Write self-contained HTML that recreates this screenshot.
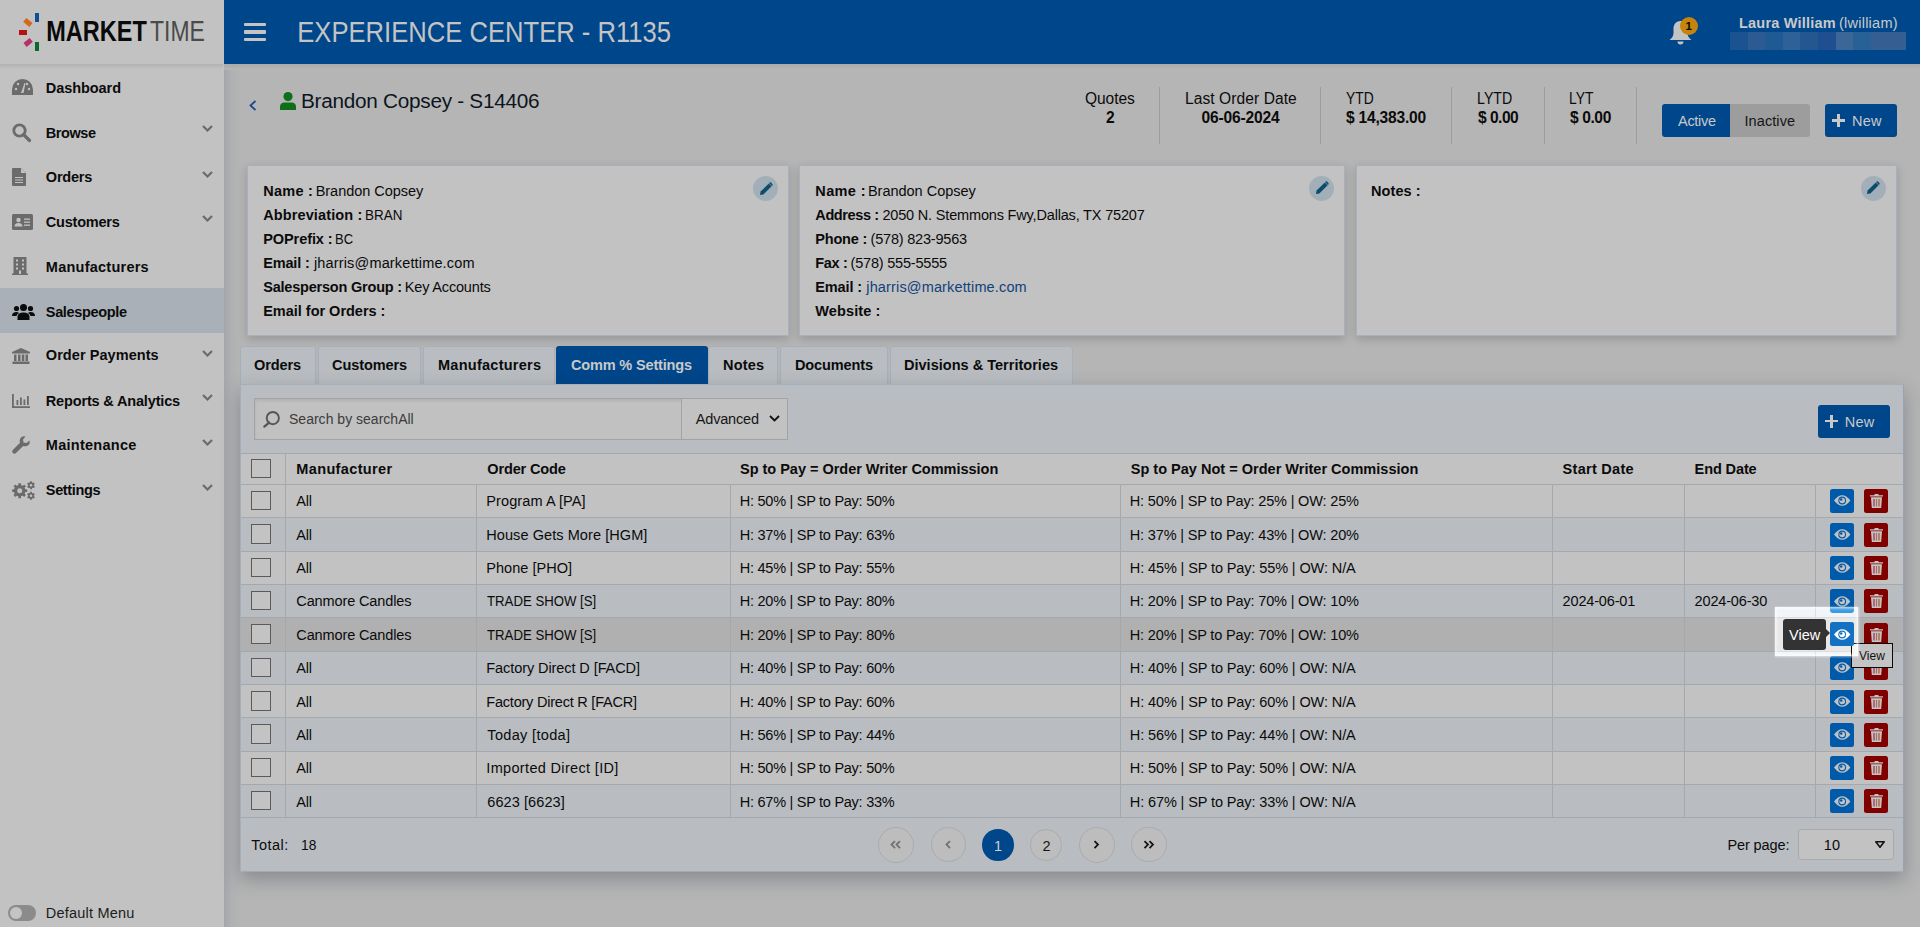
<!DOCTYPE html>
<html><head><meta charset="utf-8">
<style>
*{margin:0;padding:0;box-sizing:border-box}
html,body{width:1920px;height:927px;overflow:hidden}
body{background:#b5b5b5;font-family:"Liberation Sans",sans-serif;position:relative}
.a{position:absolute}
.t{position:absolute;white-space:nowrap;line-height:1;font-family:"Liberation Sans",sans-serif}
svg{position:absolute;overflow:visible}
</style></head><body>
<!-- main content shadow strip near sidebar -->
<div class="a" style="left:224px;top:64px;width:20px;height:863px;background:linear-gradient(90deg,#a5a6aa 0,#b0b1b3 8px,#b5b5b5 18px)"></div>
<!-- header -->
<div class="a" style="left:223px;top:0;width:1697px;height:64px;background:#00468a"></div>
<div class="a" style="left:223px;top:64px;width:1697px;height:6px;background:linear-gradient(#a9a9a9,#b7b7b7)"></div>
<!-- sidebar -->
<div class="a" style="left:0;top:0;width:224px;height:927px;background:#c2c2c2"></div>
<div class="a" style="left:0;top:64px;width:223px;height:5px;background:linear-gradient(#b2b2b2,#c2c2c2)"></div>
<div class="a" style="left:0;top:288px;width:224px;height:45px;background:#a9b0b8"></div>
<!-- logo marks -->
<div class="a" style="left:34.5px;top:13px;width:4.5px;height:8.5px;background:#0e4f96"></div>
<div class="a" style="left:34.5px;top:42px;width:4.5px;height:8.5px;background:#0b6a2a"></div>
<div class="a" style="left:19px;top:30px;width:8px;height:4.5px;background:#b80f14"></div>
<div class="a" style="left:23.5px;top:19.5px;width:8px;height:4.5px;background:#d2691a;transform:rotate(40deg)"></div>
<div class="a" style="left:23.5px;top:39.5px;width:8px;height:4.5px;background:#b8306a;transform:rotate(-40deg)"></div>
<!-- hamburger -->
<div class="a" style="left:244px;top:22.5px;width:22px;height:3.5px;background:#c4c4c4;border-radius:1px"></div>
<div class="a" style="left:244px;top:30px;width:22px;height:3.5px;background:#c4c4c4;border-radius:1px"></div>
<div class="a" style="left:244px;top:37.5px;width:22px;height:3.5px;background:#c4c4c4;border-radius:1px"></div>
<!-- bell -->
<svg style="left:1669px;top:20px" width="23" height="25" viewBox="0 0 23 25"><path d="M11.5 1 C6.5 1 4.5 5 4.5 9 L4.5 13 C4.5 16 3 18 0.5 20 L22.5 20 C20 18 18.5 16 18.5 13 L18.5 9 C18.5 5 16.5 1 11.5 1Z M8.5 21.5 A3 3 0 0 0 14.5 21.5Z" fill="#c4c4c4"/></svg>
<div class="a" style="left:1680px;top:17px;width:18px;height:18px;border-radius:50%;background:#c5840c"></div>
<!-- pixelated -->
<div class="a" style="left:1730px;top:32px;width:176px;height:18px;display:flex">
<div style="flex:1;background:#1b5390"></div><div style="flex:1;background:#2b5b92"></div><div style="flex:1;background:#1f5a95"></div><div style="flex:1;background:#2d6197"></div><div style="flex:1;background:#24568f"></div><div style="flex:1;background:#1f4f91"></div><div style="flex:1;background:#3b6798"></div><div style="flex:1;background:#286195"></div><div style="flex:1;background:#355f93"></div><div style="flex:1;background:#355f93"></div>
</div>
<!-- sidebar icons -->
<svg style="left:11.6px;top:79px" width="21" height="16" viewBox="0 0 21 16"><path d="M10.5 0 A10.5 10.5 0 0 0 0 10.5 L0 16 L21 16 L21 10.5 A10.5 10.5 0 0 0 10.5 0Z" fill="#6b6b6b"/><circle cx="4" cy="10" r="1.2" fill="#c2c2c2"/><circle cx="17" cy="10" r="1.2" fill="#c2c2c2"/><circle cx="6" cy="5" r="1.2" fill="#c2c2c2"/><circle cx="15" cy="5" r="1.2" fill="#c2c2c2"/><path d="M9 14 L12.5 4 L13.5 4.3 L11.5 14Z" fill="#c2c2c2"/></svg>
<svg style="left:11.6px;top:123px" width="19" height="19" viewBox="0 0 19 19"><circle cx="7.5" cy="7.5" r="5.7" fill="none" stroke="#6b6b6b" stroke-width="2.8"/><path d="M11.5 11.5 L17.5 17.5" stroke="#6b6b6b" stroke-width="3.2" stroke-linecap="round"/></svg>
<svg style="left:11.6px;top:168px" width="14" height="18" viewBox="0 0 14 18"><path d="M0 1 Q0 0 1 0 L9 0 L14 5 L14 17 Q14 18 13 18 L1 18 Q0 18 0 17Z" fill="#6b6b6b"/><path d="M9 0 L9 5 L14 5Z" fill="#c2c2c2"/><rect x="3" y="9" width="8" height="1" fill="#c2c2c2"/><rect x="3" y="11.5" width="8" height="1" fill="#c2c2c2"/><rect x="3" y="14" width="8" height="1" fill="#c2c2c2"/></svg>
<svg style="left:11.6px;top:214px" width="21" height="16" viewBox="0 0 21 16"><rect x="0" y="0" width="21" height="16" rx="1.5" fill="#6b6b6b"/><circle cx="6.5" cy="6" r="2.2" fill="#c2c2c2"/><path d="M2.5 12.5 Q2.5 9 6.5 9 Q10.5 9 10.5 12.5Z" fill="#c2c2c2"/><rect x="12" y="4.5" width="6" height="1.3" fill="#c2c2c2"/><rect x="12" y="7.5" width="6" height="1.3" fill="#c2c2c2"/><rect x="12" y="10.5" width="6" height="1.3" fill="#c2c2c2"/></svg>
<svg style="left:12px;top:257px" width="16" height="18" viewBox="0 0 16 18"><rect x="1.5" y="0" width="13" height="18" fill="#6b6b6b"/><rect x="0" y="16.5" width="16" height="1.5" fill="#6b6b6b"/><g fill="#c2c2c2"><rect x="4" y="2.5" width="2" height="2"/><rect x="10" y="2.5" width="2" height="2"/><rect x="4" y="6.5" width="2" height="2"/><rect x="10" y="6.5" width="2" height="2"/><rect x="4" y="10.5" width="2" height="2"/><rect x="10" y="10.5" width="2" height="2"/><rect x="7" y="13.5" width="2" height="3.5"/></g></svg>
<svg style="left:12px;top:303.5px" width="23" height="16" viewBox="0 0 23 16"><circle cx="11.5" cy="3.5" r="3.5" fill="#0b0b0b"/><circle cx="4.5" cy="4.5" r="2.6" fill="#0b0b0b"/><circle cx="18.5" cy="4.5" r="2.6" fill="#0b0b0b"/><path d="M5.5 16 L5.5 13 Q5.5 8.5 11.5 8.5 Q17.5 8.5 17.5 13 L17.5 16Z" fill="#0b0b0b"/><path d="M0 12 Q0 8 4.5 8 Q6 8 7 9 Q4.5 10.5 4.5 12Z" fill="#0b0b0b"/><path d="M23 12 Q23 8 18.5 8 Q17 8 16 9 Q18.5 10.5 18.5 12Z" fill="#0b0b0b"/></svg>
<svg style="left:12px;top:348px" width="18" height="16" viewBox="0 0 18 16"><path d="M9 0 L18 4 L18 5.5 L0 5.5 L0 4Z" fill="#6b6b6b"/><rect x="2" y="6.5" width="2.5" height="6.5" fill="#6b6b6b"/><rect x="6" y="6.5" width="2.5" height="6.5" fill="#6b6b6b"/><rect x="9.8" y="6.5" width="2.5" height="6.5" fill="#6b6b6b"/><rect x="13.5" y="6.5" width="2.5" height="6.5" fill="#6b6b6b"/><rect x="0.5" y="13.5" width="17" height="2.5" fill="#6b6b6b"/></svg>
<svg style="left:12px;top:394px" width="18" height="14" viewBox="0 0 18 14"><path d="M0 0 L1.8 0 L1.8 12.2 L18 12.2 L18 14 L0 14Z" fill="#6b6b6b"/><rect x="4.5" y="6" width="1.8" height="5" fill="#6b6b6b"/><rect x="8" y="3.5" width="1.8" height="7.5" fill="#6b6b6b"/><rect x="11.5" y="5.5" width="1.8" height="5.5" fill="#6b6b6b"/><rect x="15" y="2" width="1.8" height="9" fill="#6b6b6b"/></svg>
<svg style="left:12px;top:436px" width="18" height="18" viewBox="0 0 18 18"><path d="M17.5 4.5 L14.5 7 L11.5 6.5 L11 3.5 L13.5 0.5 Q9.5 -0.5 8 3 Q7.3 5 8 6.8 L0.8 14 Q-0.5 15.5 0.8 17 Q2.5 18.5 4 17 L11.2 10 Q13 10.7 15 10 Q18.5 8.5 17.5 4.5Z" fill="#6b6b6b"/></svg>
<svg style="left:12px;top:480.5px" width="23" height="19" viewBox="0 0 23 19"><path d="M6.35 4.27 L6.45 2.20 L8.95 2.20 L9.05 4.27 L10.59 4.90 L12.12 3.52 L13.88 5.28 L12.50 6.81 L13.13 8.35 L15.20 8.45 L15.20 10.95 L13.13 11.05 L12.50 12.59 L13.88 14.12 L12.12 15.88 L10.59 14.50 L9.05 15.13 L8.95 17.20 L6.45 17.20 L6.35 15.13 L4.81 14.50 L3.28 15.88 L1.52 14.12 L2.90 12.59 L2.27 11.05 L0.20 10.95 L0.20 8.45 L2.27 8.35 L2.90 6.81 L1.52 5.28 L3.28 3.52 L4.81 4.90Z" fill="#6b6b6b"/><circle cx="7.7" cy="9.7" r="5.6" fill="#6b6b6b"/><circle cx="7.7" cy="9.7" r="2.5" fill="#c2c2c2"/><path d="M18.08 1.45 L18.11 0.20 L19.89 0.20 L19.92 1.45 L20.92 2.02 L22.02 1.42 L22.91 2.97 L21.84 3.63 L21.84 4.77 L22.91 5.43 L22.02 6.98 L20.92 6.38 L19.92 6.95 L19.89 8.20 L18.11 8.20 L18.08 6.95 L17.08 6.38 L15.98 6.98 L15.09 5.43 L16.16 4.77 L16.16 3.63 L15.09 2.97 L15.98 1.42 L17.08 2.02Z" fill="#6b6b6b"/><circle cx="19" cy="4.2" r="2.9" fill="#6b6b6b"/><circle cx="19" cy="4.2" r="1.2" fill="#c2c2c2"/><path d="M18.08 12.05 L18.11 10.80 L19.89 10.80 L19.92 12.05 L20.92 12.62 L22.02 12.02 L22.91 13.57 L21.84 14.23 L21.84 15.37 L22.91 16.03 L22.02 17.58 L20.92 16.98 L19.92 17.55 L19.89 18.80 L18.11 18.80 L18.08 17.55 L17.08 16.98 L15.98 17.58 L15.09 16.03 L16.16 15.37 L16.16 14.23 L15.09 13.57 L15.98 12.02 L17.08 12.62Z" fill="#6b6b6b"/><circle cx="19" cy="14.8" r="2.9" fill="#6b6b6b"/><circle cx="19" cy="14.8" r="1.2" fill="#c2c2c2"/></svg>
<!-- sidebar chevrons -->
<svg style="left:202px;top:125px" width="11" height="7" viewBox="0 0 11 7"><path d="M1 1 L5.5 5.5 L10 1" fill="none" stroke="#6b6b6b" stroke-width="2.2"/></svg>
<svg style="left:202px;top:170.5px" width="11" height="7" viewBox="0 0 11 7"><path d="M1 1 L5.5 5.5 L10 1" fill="none" stroke="#6b6b6b" stroke-width="2.2"/></svg>
<svg style="left:202px;top:214.5px" width="11" height="7" viewBox="0 0 11 7"><path d="M1 1 L5.5 5.5 L10 1" fill="none" stroke="#6b6b6b" stroke-width="2.2"/></svg>
<svg style="left:202px;top:349.5px" width="11" height="7" viewBox="0 0 11 7"><path d="M1 1 L5.5 5.5 L10 1" fill="none" stroke="#6b6b6b" stroke-width="2.2"/></svg>
<svg style="left:202px;top:394px" width="11" height="7" viewBox="0 0 11 7"><path d="M1 1 L5.5 5.5 L10 1" fill="none" stroke="#6b6b6b" stroke-width="2.2"/></svg>
<svg style="left:202px;top:438.5px" width="11" height="7" viewBox="0 0 11 7"><path d="M1 1 L5.5 5.5 L10 1" fill="none" stroke="#6b6b6b" stroke-width="2.2"/></svg>
<svg style="left:202px;top:483.5px" width="11" height="7" viewBox="0 0 11 7"><path d="M1 1 L5.5 5.5 L10 1" fill="none" stroke="#6b6b6b" stroke-width="2.2"/></svg>
<!-- default menu toggle -->
<div class="a" style="left:8px;top:905px;width:28px;height:16px;border-radius:8px;background:#8b8b8b"></div>
<div class="a" style="left:10px;top:907px;width:12px;height:12px;border-radius:50%;background:#c4c4c4"></div>
<!-- title icons -->
<svg style="left:249px;top:99.5px" width="8" height="11" viewBox="0 0 8 11"><path d="M6.5 1 L1.5 5.5 L6.5 10" fill="none" stroke="#1a4c8c" stroke-width="1.8"/></svg>
<svg style="left:280px;top:92px" width="16" height="18" viewBox="0 0 16 18"><circle cx="8" cy="4.6" r="4.6" fill="#0e6e1a"/><path d="M0 18 L0 15 Q0 10.5 4.5 10.5 L11.5 10.5 Q16 10.5 16 15 L16 18Z" fill="#0e6e1a"/></svg>
<!-- stats separators -->
<div class="a" style="left:1159px;top:87px;width:1px;height:57px;background:#9c9c9c"></div>
<div class="a" style="left:1320px;top:87px;width:1px;height:57px;background:#9c9c9c"></div>
<div class="a" style="left:1451px;top:87px;width:1px;height:57px;background:#9c9c9c"></div>
<div class="a" style="left:1544px;top:87px;width:1px;height:57px;background:#9c9c9c"></div>
<div class="a" style="left:1636px;top:87px;width:1px;height:57px;background:#9c9c9c"></div>
<!-- active/inactive/new -->
<div class="a" style="left:1662px;top:104px;width:68px;height:33px;background:#00468a;border-radius:3px 0 0 3px"></div>
<div class="a" style="left:1730px;top:104px;width:80px;height:33px;background:#9d9d9d;border-radius:0 3px 3px 0"></div>
<div class="a" style="left:1825px;top:104px;width:72px;height:33px;background:#00468a;border-radius:3px"></div>
<div class="a" style="left:1832px;top:119px;width:13px;height:2.6px;background:#c9c9c9"></div>
<div class="a" style="left:1837.2px;top:113.8px;width:2.6px;height:13px;background:#c9c9c9"></div>
<!-- cards -->
<div class="a" style="left:247px;top:165px;width:541.5px;height:170.5px;background:#c2c2c2;border:1px solid #a8b1bb;box-shadow:0 3px 9px rgba(20,25,40,0.2)"></div>
<div class="a" style="left:799px;top:165px;width:545.5px;height:170.5px;background:#c2c2c2;border:1px solid #a8b1bb;box-shadow:0 3px 9px rgba(20,25,40,0.2)"></div>
<div class="a" style="left:1356px;top:165px;width:541px;height:170.5px;background:#c2c2c2;border:1px solid #a8b1bb;box-shadow:0 3px 9px rgba(20,25,40,0.2)"></div>
<div class="a" style="left:753.1px;top:176.0px;width:25px;height:25px;border-radius:50%;background:#a3afb8"></div><svg style="left:758.6px;top:181.5px" width="14" height="14" viewBox="0 0 14 14"><path d="M1 13 L1.6 9.6 L9.8 1.4 L12.6 4.2 L4.4 12.4Z" fill="#0c4d6c"/><path d="M10.6 0.6 Q11.3 -0.1 12 0.6 L13.4 2 Q14.1 2.7 13.4 3.4 L12.9 3.9 L10.1 1.1Z" fill="#0c4d6c"/></svg><div class="a" style="left:1309.0px;top:175.8px;width:25px;height:25px;border-radius:50%;background:#a3afb8"></div><svg style="left:1314.5px;top:181.3px" width="14" height="14" viewBox="0 0 14 14"><path d="M1 13 L1.6 9.6 L9.8 1.4 L12.6 4.2 L4.4 12.4Z" fill="#0c4d6c"/><path d="M10.6 0.6 Q11.3 -0.1 12 0.6 L13.4 2 Q14.1 2.7 13.4 3.4 L12.9 3.9 L10.1 1.1Z" fill="#0c4d6c"/></svg><div class="a" style="left:1860.5px;top:175.8px;width:25px;height:25px;border-radius:50%;background:#a3afb8"></div><svg style="left:1866px;top:181.3px" width="14" height="14" viewBox="0 0 14 14"><path d="M1 13 L1.6 9.6 L9.8 1.4 L12.6 4.2 L4.4 12.4Z" fill="#0c4d6c"/><path d="M10.6 0.6 Q11.3 -0.1 12 0.6 L13.4 2 Q14.1 2.7 13.4 3.4 L12.9 3.9 L10.1 1.1Z" fill="#0c4d6c"/></svg>
<!-- tabs -->
<div class="a" style="left:239.7px;top:345.7px;width:76.30000000000001px;height:38.8px;background:#b9bdc1;border:1px solid #a7b0ba;border-bottom:none;border-radius:3px 3px 0 0"></div><div class="a" style="left:317.8px;top:345.7px;width:103.5px;height:38.8px;background:#b9bdc1;border:1px solid #a7b0ba;border-bottom:none;border-radius:3px 3px 0 0"></div><div class="a" style="left:422.5px;top:345.7px;width:132.5px;height:38.8px;background:#b9bdc1;border:1px solid #a7b0ba;border-bottom:none;border-radius:3px 3px 0 0"></div><div class="a" style="left:555.8px;top:345.7px;width:151.80000000000007px;height:38.3px;background:#00468a;border-radius:3px 3px 0 0"></div><div class="a" style="left:708.4px;top:345.7px;width:69.89999999999998px;height:38.8px;background:#b9bdc1;border:1px solid #a7b0ba;border-bottom:none;border-radius:3px 3px 0 0"></div><div class="a" style="left:780px;top:345.7px;width:108px;height:38.8px;background:#b9bdc1;border:1px solid #a7b0ba;border-bottom:none;border-radius:3px 3px 0 0"></div><div class="a" style="left:889.5px;top:345.7px;width:183.9000000000001px;height:38.8px;background:#b9bdc1;border:1px solid #a7b0ba;border-bottom:none;border-radius:3px 3px 0 0"></div><div class="a" style="left:1073px;top:383.5px;width:830.5px;height:1px;background:#9fa9b4"></div>
<!-- panel -->
<div class="a" style="left:240px;top:384px;width:1663.5px;height:488px;background:#b9bdc1;border:1px solid #a5afba;border-right:1.5px solid #98a3b1;border-bottom:1.5px solid #a0abb8;box-shadow:0 7px 18px rgba(25,35,55,0.3)"></div>
<!-- search -->
<div class="a" style="left:254.3px;top:398.3px;width:534px;height:41.5px;background:#c1c1c1;border:1px solid #a3a3a3;box-shadow:inset 0 2px 3px rgba(0,0,0,0.08)"></div>
<div class="a" style="left:681.3px;top:398.3px;width:107px;height:41.5px;background:#c2c2c2;border:1px solid #a3a3a3"></div>
<svg style="left:262.5px;top:410.5px" width="17" height="17" viewBox="0 0 17 17"><circle cx="9.8" cy="7.1" r="6.1" fill="none" stroke="#555" stroke-width="1.9"/><path d="M6.2 11.6 L1.3 15.6" stroke="#555" stroke-width="2.3" stroke-linecap="round"/></svg>
<svg style="left:769px;top:414.5px" width="11" height="7" viewBox="0 0 11 7"><path d="M1 1 L5.5 5.5 L10 1" fill="none" stroke="#111" stroke-width="1.8"/></svg>
<div class="a" style="left:1818px;top:404.8px;width:72px;height:33px;background:#00468a;border-radius:3px"></div>
<div class="a" style="left:1825px;top:419.8px;width:13px;height:2.6px;background:#c9c9c9"></div>
<div class="a" style="left:1830.2px;top:414.6px;width:2.6px;height:13px;background:#c9c9c9"></div>
<!-- table -->
<div class="a" style="left:240.5px;top:453.5px;width:1662.5px;height:30.5px;background:#c2c2c2"></div><div class="a" style="left:240.5px;top:484px;width:1662.5px;height:33.5px;background:#c2c2c2"></div><div class="a" style="left:240.5px;top:517.5px;width:1662.5px;height:33.5px;background:#b9bdc1"></div><div class="a" style="left:240.5px;top:551px;width:1662.5px;height:33.299999999999955px;background:#c2c2c2"></div><div class="a" style="left:240.5px;top:584.3px;width:1662.5px;height:33.200000000000045px;background:#b9bdc1"></div><div class="a" style="left:240.5px;top:617.5px;width:1662.5px;height:33.5px;background:#b0b0b0"></div><div class="a" style="left:240.5px;top:651px;width:1662.5px;height:33.5px;background:#b9bdc1"></div><div class="a" style="left:240.5px;top:684.5px;width:1662.5px;height:33.200000000000045px;background:#c2c2c2"></div><div class="a" style="left:240.5px;top:717.7px;width:1662.5px;height:33.299999999999955px;background:#b9bdc1"></div><div class="a" style="left:240.5px;top:751px;width:1662.5px;height:33.39999999999998px;background:#c2c2c2"></div><div class="a" style="left:240.5px;top:784.4px;width:1662.5px;height:33.0px;background:#b9bdc1"></div><div class="a" style="left:240.5px;top:453.0px;width:1662.5px;height:1px;background:#a4a9ae"></div><div class="a" style="left:240.5px;top:483.5px;width:1662.5px;height:1px;background:#a4a9ae"></div><div class="a" style="left:240.5px;top:517.0px;width:1662.5px;height:1px;background:#a4a9ae"></div><div class="a" style="left:240.5px;top:550.5px;width:1662.5px;height:1px;background:#a4a9ae"></div><div class="a" style="left:240.5px;top:583.8px;width:1662.5px;height:1px;background:#a4a9ae"></div><div class="a" style="left:240.5px;top:617.0px;width:1662.5px;height:1px;background:#a4a9ae"></div><div class="a" style="left:240.5px;top:650.5px;width:1662.5px;height:1px;background:#a4a9ae"></div><div class="a" style="left:240.5px;top:684.0px;width:1662.5px;height:1px;background:#a4a9ae"></div><div class="a" style="left:240.5px;top:717.2px;width:1662.5px;height:1px;background:#a4a9ae"></div><div class="a" style="left:240.5px;top:750.5px;width:1662.5px;height:1px;background:#a4a9ae"></div><div class="a" style="left:240.5px;top:783.9px;width:1662.5px;height:1px;background:#a4a9ae"></div><div class="a" style="left:240.5px;top:816.9px;width:1662.5px;height:1px;background:#a4a9ae"></div><div class="a" style="left:285px;top:453.5px;width:1px;height:363.9px;background:#a4a9ae"></div><div class="a" style="left:476.0px;top:484px;width:1px;height:333.4px;background:#a4a9ae"></div><div class="a" style="left:730.0px;top:484px;width:1px;height:333.4px;background:#a4a9ae"></div><div class="a" style="left:1120.0px;top:484px;width:1px;height:333.4px;background:#a4a9ae"></div><div class="a" style="left:1552.3px;top:484px;width:1px;height:333.4px;background:#a4a9ae"></div><div class="a" style="left:1683.9px;top:484px;width:1px;height:333.4px;background:#a4a9ae"></div><div class="a" style="left:1814.8px;top:484px;width:1px;height:333.4px;background:#a4a9ae"></div><div class="a" style="left:251px;top:458.7px;width:19.5px;height:19.5px;background:#c3c3c3;border:1px solid #5a5a5a;border-radius:0"></div><div class="a" style="left:251px;top:490.75px;width:19.5px;height:19.5px;background:#c3c3c3;border:1px solid #5a5a5a;border-radius:0"></div><div class="a" style="left:1830px;top:489px;width:24px;height:24px;background:#005aaa;border-radius:2.5px"></div><svg style="left:1833.8px;top:495.2px" width="16.4" height="11" viewBox="0 0 16.4 11"><path d="M0 5.5 Q8.2 -5 16.4 5.5 Q8.2 16 0 5.5Z" fill="#c3c3c3"/><circle cx="8.2" cy="5.5" r="3.9" fill="#005aaa"/><circle cx="8.2" cy="5.5" r="2.8" fill="#c3c3c3"/><circle cx="7.2" cy="4.5" r="1.3" fill="#005aaa"/></svg><div class="a" style="left:1864px;top:489px;width:24px;height:24px;background:#800000;border-radius:2.5px"></div><svg style="left:1869.5px;top:494px" width="13" height="14" viewBox="0 0 13 14"><path d="M0 1.2 L4.2 1.2 L4.8 0 L8.2 0 L8.8 1.2 L13 1.2 L13 2.6 L0 2.6Z" fill="#c3c3c3"/><path d="M1 3.3 L12 3.3 L11.2 14 L1.8 14Z" fill="#c3c3c3"/><rect x="3.4" y="5" width="1.2" height="7.5" fill="#a02a60"/><rect x="5.9" y="5" width="1.2" height="7.5" fill="#b0703a"/><rect x="8.4" y="5" width="1.2" height="7.5" fill="#a8583a"/></svg><div class="a" style="left:251px;top:524.25px;width:19.5px;height:19.5px;background:#c3c3c3;border:1px solid #5a5a5a;border-radius:0"></div><div class="a" style="left:1830px;top:522.5px;width:24px;height:24px;background:#005aaa;border-radius:2.5px"></div><svg style="left:1833.8px;top:528.7px" width="16.4" height="11" viewBox="0 0 16.4 11"><path d="M0 5.5 Q8.2 -5 16.4 5.5 Q8.2 16 0 5.5Z" fill="#c3c3c3"/><circle cx="8.2" cy="5.5" r="3.9" fill="#005aaa"/><circle cx="8.2" cy="5.5" r="2.8" fill="#c3c3c3"/><circle cx="7.2" cy="4.5" r="1.3" fill="#005aaa"/></svg><div class="a" style="left:1864px;top:522.5px;width:24px;height:24px;background:#800000;border-radius:2.5px"></div><svg style="left:1869.5px;top:527.5px" width="13" height="14" viewBox="0 0 13 14"><path d="M0 1.2 L4.2 1.2 L4.8 0 L8.2 0 L8.8 1.2 L13 1.2 L13 2.6 L0 2.6Z" fill="#c3c3c3"/><path d="M1 3.3 L12 3.3 L11.2 14 L1.8 14Z" fill="#c3c3c3"/><rect x="3.4" y="5" width="1.2" height="7.5" fill="#a02a60"/><rect x="5.9" y="5" width="1.2" height="7.5" fill="#b0703a"/><rect x="8.4" y="5" width="1.2" height="7.5" fill="#a8583a"/></svg><div class="a" style="left:251px;top:557.65px;width:19.5px;height:19.5px;background:#c3c3c3;border:1px solid #5a5a5a;border-radius:0"></div><div class="a" style="left:1830px;top:556px;width:24px;height:24px;background:#005aaa;border-radius:2.5px"></div><svg style="left:1833.8px;top:562.2px" width="16.4" height="11" viewBox="0 0 16.4 11"><path d="M0 5.5 Q8.2 -5 16.4 5.5 Q8.2 16 0 5.5Z" fill="#c3c3c3"/><circle cx="8.2" cy="5.5" r="3.9" fill="#005aaa"/><circle cx="8.2" cy="5.5" r="2.8" fill="#c3c3c3"/><circle cx="7.2" cy="4.5" r="1.3" fill="#005aaa"/></svg><div class="a" style="left:1864px;top:556px;width:24px;height:24px;background:#800000;border-radius:2.5px"></div><svg style="left:1869.5px;top:561px" width="13" height="14" viewBox="0 0 13 14"><path d="M0 1.2 L4.2 1.2 L4.8 0 L8.2 0 L8.8 1.2 L13 1.2 L13 2.6 L0 2.6Z" fill="#c3c3c3"/><path d="M1 3.3 L12 3.3 L11.2 14 L1.8 14Z" fill="#c3c3c3"/><rect x="3.4" y="5" width="1.2" height="7.5" fill="#a02a60"/><rect x="5.9" y="5" width="1.2" height="7.5" fill="#b0703a"/><rect x="8.4" y="5" width="1.2" height="7.5" fill="#a8583a"/></svg><div class="a" style="left:251px;top:590.9px;width:19.5px;height:19.5px;background:#c3c3c3;border:1px solid #5a5a5a;border-radius:0"></div><div class="a" style="left:1830px;top:589.3px;width:24px;height:24px;background:#005aaa;border-radius:2.5px"></div><svg style="left:1833.8px;top:595.5px" width="16.4" height="11" viewBox="0 0 16.4 11"><path d="M0 5.5 Q8.2 -5 16.4 5.5 Q8.2 16 0 5.5Z" fill="#c3c3c3"/><circle cx="8.2" cy="5.5" r="3.9" fill="#005aaa"/><circle cx="8.2" cy="5.5" r="2.8" fill="#c3c3c3"/><circle cx="7.2" cy="4.5" r="1.3" fill="#005aaa"/></svg><div class="a" style="left:1864px;top:589.3px;width:24px;height:24px;background:#800000;border-radius:2.5px"></div><svg style="left:1869.5px;top:594.3px" width="13" height="14" viewBox="0 0 13 14"><path d="M0 1.2 L4.2 1.2 L4.8 0 L8.2 0 L8.8 1.2 L13 1.2 L13 2.6 L0 2.6Z" fill="#c3c3c3"/><path d="M1 3.3 L12 3.3 L11.2 14 L1.8 14Z" fill="#c3c3c3"/><rect x="3.4" y="5" width="1.2" height="7.5" fill="#a02a60"/><rect x="5.9" y="5" width="1.2" height="7.5" fill="#b0703a"/><rect x="8.4" y="5" width="1.2" height="7.5" fill="#a8583a"/></svg><div class="a" style="left:251px;top:624.25px;width:19.5px;height:19.5px;background:#c3c3c3;border:1px solid #5a5a5a;border-radius:0"></div><div class="a" style="left:1830px;top:622.5px;width:24px;height:24px;background:#005aaa;border-radius:2.5px"></div><svg style="left:1833.8px;top:628.7px" width="16.4" height="11" viewBox="0 0 16.4 11"><path d="M0 5.5 Q8.2 -5 16.4 5.5 Q8.2 16 0 5.5Z" fill="#c3c3c3"/><circle cx="8.2" cy="5.5" r="3.9" fill="#005aaa"/><circle cx="8.2" cy="5.5" r="2.8" fill="#c3c3c3"/><circle cx="7.2" cy="4.5" r="1.3" fill="#005aaa"/></svg><div class="a" style="left:1864px;top:622.5px;width:24px;height:24px;background:#800000;border-radius:2.5px"></div><svg style="left:1869.5px;top:627.5px" width="13" height="14" viewBox="0 0 13 14"><path d="M0 1.2 L4.2 1.2 L4.8 0 L8.2 0 L8.8 1.2 L13 1.2 L13 2.6 L0 2.6Z" fill="#c3c3c3"/><path d="M1 3.3 L12 3.3 L11.2 14 L1.8 14Z" fill="#c3c3c3"/><rect x="3.4" y="5" width="1.2" height="7.5" fill="#a02a60"/><rect x="5.9" y="5" width="1.2" height="7.5" fill="#b0703a"/><rect x="8.4" y="5" width="1.2" height="7.5" fill="#a8583a"/></svg><div class="a" style="left:251px;top:657.75px;width:19.5px;height:19.5px;background:#c3c3c3;border:1px solid #5a5a5a;border-radius:0"></div><div class="a" style="left:1830px;top:656px;width:24px;height:24px;background:#005aaa;border-radius:2.5px"></div><svg style="left:1833.8px;top:662.2px" width="16.4" height="11" viewBox="0 0 16.4 11"><path d="M0 5.5 Q8.2 -5 16.4 5.5 Q8.2 16 0 5.5Z" fill="#c3c3c3"/><circle cx="8.2" cy="5.5" r="3.9" fill="#005aaa"/><circle cx="8.2" cy="5.5" r="2.8" fill="#c3c3c3"/><circle cx="7.2" cy="4.5" r="1.3" fill="#005aaa"/></svg><div class="a" style="left:1864px;top:656px;width:24px;height:24px;background:#800000;border-radius:2.5px"></div><svg style="left:1869.5px;top:661px" width="13" height="14" viewBox="0 0 13 14"><path d="M0 1.2 L4.2 1.2 L4.8 0 L8.2 0 L8.8 1.2 L13 1.2 L13 2.6 L0 2.6Z" fill="#c3c3c3"/><path d="M1 3.3 L12 3.3 L11.2 14 L1.8 14Z" fill="#c3c3c3"/><rect x="3.4" y="5" width="1.2" height="7.5" fill="#a02a60"/><rect x="5.9" y="5" width="1.2" height="7.5" fill="#b0703a"/><rect x="8.4" y="5" width="1.2" height="7.5" fill="#a8583a"/></svg><div class="a" style="left:251px;top:691.1px;width:19.5px;height:19.5px;background:#c3c3c3;border:1px solid #5a5a5a;border-radius:0"></div><div class="a" style="left:1830px;top:689.5px;width:24px;height:24px;background:#005aaa;border-radius:2.5px"></div><svg style="left:1833.8px;top:695.7px" width="16.4" height="11" viewBox="0 0 16.4 11"><path d="M0 5.5 Q8.2 -5 16.4 5.5 Q8.2 16 0 5.5Z" fill="#c3c3c3"/><circle cx="8.2" cy="5.5" r="3.9" fill="#005aaa"/><circle cx="8.2" cy="5.5" r="2.8" fill="#c3c3c3"/><circle cx="7.2" cy="4.5" r="1.3" fill="#005aaa"/></svg><div class="a" style="left:1864px;top:689.5px;width:24px;height:24px;background:#800000;border-radius:2.5px"></div><svg style="left:1869.5px;top:694.5px" width="13" height="14" viewBox="0 0 13 14"><path d="M0 1.2 L4.2 1.2 L4.8 0 L8.2 0 L8.8 1.2 L13 1.2 L13 2.6 L0 2.6Z" fill="#c3c3c3"/><path d="M1 3.3 L12 3.3 L11.2 14 L1.8 14Z" fill="#c3c3c3"/><rect x="3.4" y="5" width="1.2" height="7.5" fill="#a02a60"/><rect x="5.9" y="5" width="1.2" height="7.5" fill="#b0703a"/><rect x="8.4" y="5" width="1.2" height="7.5" fill="#a8583a"/></svg><div class="a" style="left:251px;top:724.35px;width:19.5px;height:19.5px;background:#c3c3c3;border:1px solid #5a5a5a;border-radius:0"></div><div class="a" style="left:1830px;top:722.7px;width:24px;height:24px;background:#005aaa;border-radius:2.5px"></div><svg style="left:1833.8px;top:728.9000000000001px" width="16.4" height="11" viewBox="0 0 16.4 11"><path d="M0 5.5 Q8.2 -5 16.4 5.5 Q8.2 16 0 5.5Z" fill="#c3c3c3"/><circle cx="8.2" cy="5.5" r="3.9" fill="#005aaa"/><circle cx="8.2" cy="5.5" r="2.8" fill="#c3c3c3"/><circle cx="7.2" cy="4.5" r="1.3" fill="#005aaa"/></svg><div class="a" style="left:1864px;top:722.7px;width:24px;height:24px;background:#800000;border-radius:2.5px"></div><svg style="left:1869.5px;top:727.7px" width="13" height="14" viewBox="0 0 13 14"><path d="M0 1.2 L4.2 1.2 L4.8 0 L8.2 0 L8.8 1.2 L13 1.2 L13 2.6 L0 2.6Z" fill="#c3c3c3"/><path d="M1 3.3 L12 3.3 L11.2 14 L1.8 14Z" fill="#c3c3c3"/><rect x="3.4" y="5" width="1.2" height="7.5" fill="#a02a60"/><rect x="5.9" y="5" width="1.2" height="7.5" fill="#b0703a"/><rect x="8.4" y="5" width="1.2" height="7.5" fill="#a8583a"/></svg><div class="a" style="left:251px;top:757.7px;width:19.5px;height:19.5px;background:#c3c3c3;border:1px solid #5a5a5a;border-radius:0"></div><div class="a" style="left:1830px;top:756px;width:24px;height:24px;background:#005aaa;border-radius:2.5px"></div><svg style="left:1833.8px;top:762.2px" width="16.4" height="11" viewBox="0 0 16.4 11"><path d="M0 5.5 Q8.2 -5 16.4 5.5 Q8.2 16 0 5.5Z" fill="#c3c3c3"/><circle cx="8.2" cy="5.5" r="3.9" fill="#005aaa"/><circle cx="8.2" cy="5.5" r="2.8" fill="#c3c3c3"/><circle cx="7.2" cy="4.5" r="1.3" fill="#005aaa"/></svg><div class="a" style="left:1864px;top:756px;width:24px;height:24px;background:#800000;border-radius:2.5px"></div><svg style="left:1869.5px;top:761px" width="13" height="14" viewBox="0 0 13 14"><path d="M0 1.2 L4.2 1.2 L4.8 0 L8.2 0 L8.8 1.2 L13 1.2 L13 2.6 L0 2.6Z" fill="#c3c3c3"/><path d="M1 3.3 L12 3.3 L11.2 14 L1.8 14Z" fill="#c3c3c3"/><rect x="3.4" y="5" width="1.2" height="7.5" fill="#a02a60"/><rect x="5.9" y="5" width="1.2" height="7.5" fill="#b0703a"/><rect x="8.4" y="5" width="1.2" height="7.5" fill="#a8583a"/></svg><div class="a" style="left:251px;top:790.9px;width:19.5px;height:19.5px;background:#c3c3c3;border:1px solid #5a5a5a;border-radius:0"></div><div class="a" style="left:1830px;top:789.4px;width:24px;height:24px;background:#005aaa;border-radius:2.5px"></div><svg style="left:1833.8px;top:795.6px" width="16.4" height="11" viewBox="0 0 16.4 11"><path d="M0 5.5 Q8.2 -5 16.4 5.5 Q8.2 16 0 5.5Z" fill="#c3c3c3"/><circle cx="8.2" cy="5.5" r="3.9" fill="#005aaa"/><circle cx="8.2" cy="5.5" r="2.8" fill="#c3c3c3"/><circle cx="7.2" cy="4.5" r="1.3" fill="#005aaa"/></svg><div class="a" style="left:1864px;top:789.4px;width:24px;height:24px;background:#800000;border-radius:2.5px"></div><svg style="left:1869.5px;top:794.4px" width="13" height="14" viewBox="0 0 13 14"><path d="M0 1.2 L4.2 1.2 L4.8 0 L8.2 0 L8.8 1.2 L13 1.2 L13 2.6 L0 2.6Z" fill="#c3c3c3"/><path d="M1 3.3 L12 3.3 L11.2 14 L1.8 14Z" fill="#c3c3c3"/><rect x="3.4" y="5" width="1.2" height="7.5" fill="#a02a60"/><rect x="5.9" y="5" width="1.2" height="7.5" fill="#b0703a"/><rect x="8.4" y="5" width="1.2" height="7.5" fill="#a8583a"/></svg>
<!-- pagination -->
<div class="a" style="left:877.5px;top:826.6px;width:36px;height:36px;border-radius:50%;background:#bdbdbd;border:1px solid #a9abad"></div><div class="a" style="left:930.5px;top:827.1px;width:35px;height:35px;border-radius:50%;background:#bdbdbd;border:1px solid #a9abad"></div><div class="a" style="left:982.25px;top:829.25px;width:31.5px;height:31.5px;border-radius:50%;background:#00468a;border:none"></div><div class="a" style="left:1030.25px;top:829.25px;width:31.5px;height:31.5px;border-radius:50%;background:#bdbdbd;border:1px solid #a9abad"></div><div class="a" style="left:1078.5px;top:826.6px;width:36px;height:36px;border-radius:50%;background:#bdbdbd;border:1px solid #a9abad"></div><div class="a" style="left:1131.25px;top:826.85px;width:35.5px;height:35.5px;border-radius:50%;background:#bdbdbd;border:1px solid #a9abad"></div><svg style="left:0;top:0" width="1920" height="927"><path d="M895.0 841.1 L891.5 844.6 L895.0 848.1" fill="none" stroke="#717171" stroke-width="1.8"/><path d="M900.0 841.1 L896.5 844.6 L900.0 848.1" fill="none" stroke="#717171" stroke-width="1.8"/><path d="M950 841.1 L946.5 844.6 L950 848.1" fill="none" stroke="#717171" stroke-width="1.8"/><path d="M1094.5 841.1 L1098.0 844.6 L1094.5 848.1" fill="none" stroke="#151515" stroke-width="1.8"/><path d="M1144.5 841.1 L1148.0 844.6 L1144.5 848.1" fill="none" stroke="#151515" stroke-width="1.8"/><path d="M1149.5 841.1 L1153.0 844.6 L1149.5 848.1" fill="none" stroke="#151515" stroke-width="1.8"/></svg><div class="a" style="left:1797.7px;top:829.2px;width:96.8px;height:31.2px;background:#c2c2c2;border:1px solid #a9a9a9;border-radius:3px"></div><svg style="left:1875px;top:840.5px" width="10" height="7" viewBox="0 0 10 7"><path d="M0.8 0.8 L9.2 0.8 L5 6.2Z" fill="none" stroke="#111" stroke-width="1.6" stroke-linejoin="round"/></svg>
<span class="t" id="t0" style="left:46.00px;top:17.45px;font-size:29.00px;font-weight:700;color:#0a0a0a;letter-spacing:0.000px;transform:scaleX(0.8108);transform-origin:1.0px 0;">MARKET</span><span class="t" id="t1" style="left:149.50px;top:17.45px;font-size:29.00px;font-weight:400;color:#4a4a4a;letter-spacing:0.000px;transform:scaleX(0.7907);transform-origin:0.0px 0;">TIME</span><span class="t" id="t2" style="left:297.00px;top:17.90px;font-size:29.06px;font-weight:400;color:#c4c4c4;letter-spacing:0.000px;transform:scaleX(0.8816);transform-origin:2.0px 0;">EXPERIENCE CENTER - R1135</span><span class="t" id="t3" style="left:1739.00px;top:16.00px;font-size:14.53px;font-weight:700;color:#c9c9c9;letter-spacing:0.197px;">Laura William</span><span class="t" id="t4" style="left:1839.00px;top:16.00px;font-size:14.53px;font-weight:400;color:#c9c9c9;letter-spacing:0.233px;">(lwilliam)</span><span class="t" id="t5" style="left:1685.50px;top:20.83px;font-size:11.42px;font-weight:700;color:#0a0a0a;letter-spacing:0.000px;">1</span><span class="t" id="t6" style="left:45.80px;top:80.50px;font-size:14.53px;font-weight:700;color:#0b0b0b;letter-spacing:-0.069px;">Dashboard</span><span class="t" id="t7" style="left:45.80px;top:126.00px;font-size:14.53px;font-weight:700;color:#0b0b0b;letter-spacing:-0.432px;">Browse</span><span class="t" id="t8" style="left:45.80px;top:169.50px;font-size:14.53px;font-weight:700;color:#0b0b0b;letter-spacing:-0.206px;">Orders</span><span class="t" id="t9" style="left:45.80px;top:214.70px;font-size:14.53px;font-weight:700;color:#0b0b0b;letter-spacing:-0.219px;">Customers</span><span class="t" id="t10" style="left:45.80px;top:259.70px;font-size:14.53px;font-weight:700;color:#0b0b0b;letter-spacing:0.238px;">Manufacturers</span><span class="t" id="t11" style="left:45.80px;top:304.70px;font-size:14.53px;font-weight:700;color:#0b0b0b;letter-spacing:-0.344px;">Salespeople</span><span class="t" id="t12" style="left:45.80px;top:348.40px;font-size:14.53px;font-weight:700;color:#0b0b0b;letter-spacing:0.056px;">Order Payments</span><span class="t" id="t13" style="left:45.80px;top:393.60px;font-size:14.53px;font-weight:700;color:#0b0b0b;letter-spacing:-0.170px;">Reports &amp; Analytics</span><span class="t" id="t14" style="left:45.80px;top:438.40px;font-size:14.53px;font-weight:700;color:#0b0b0b;letter-spacing:0.265px;">Maintenance</span><span class="t" id="t15" style="left:45.80px;top:483.30px;font-size:14.53px;font-weight:700;color:#0b0b0b;letter-spacing:-0.341px;">Settings</span><span class="t" id="t16" style="left:45.75px;top:905.95px;font-size:14.53px;font-weight:400;color:#1c1c1c;letter-spacing:0.203px;">Default Menu</span><span class="t" id="t17" style="left:301.00px;top:91.43px;font-size:20.76px;font-weight:400;color:#0c1521;letter-spacing:-0.273px;">Brandon Copsey - S14406</span><span class="t" id="t18" style="left:1085.00px;top:90.62px;font-size:15.57px;font-weight:400;color:#0b0b0b;letter-spacing:-0.070px;">Quotes</span><span class="t" id="t19" style="left:1106.00px;top:110.42px;font-size:15.57px;font-weight:700;color:#0b0b0b;letter-spacing:0.000px;">2</span><span class="t" id="t20" style="left:1185.00px;top:90.62px;font-size:15.57px;font-weight:400;color:#0b0b0b;letter-spacing:0.074px;">Last Order Date</span><span class="t" id="t21" style="left:1201.50px;top:110.42px;font-size:15.57px;font-weight:700;color:#0b0b0b;letter-spacing:-0.153px;">06-06-2024</span><span class="t" id="t22" style="left:1346.00px;top:90.62px;font-size:15.57px;font-weight:400;color:#0b0b0b;letter-spacing:0.000px;transform:scaleX(0.8877);transform-origin:0.0px 0;">YTD</span><span class="t" id="t23" style="left:1346.00px;top:110.42px;font-size:15.57px;font-weight:700;color:#0b0b0b;letter-spacing:-0.198px;">$ 14,383.00</span><span class="t" id="t24" style="left:1477.00px;top:90.62px;font-size:15.57px;font-weight:400;color:#0b0b0b;letter-spacing:0.000px;transform:scaleX(0.9101);transform-origin:1.0px 0;">LYTD</span><span class="t" id="t25" style="left:1478.00px;top:110.42px;font-size:15.57px;font-weight:700;color:#0b0b0b;letter-spacing:-0.516px;">$ 0.00</span><span class="t" id="t26" style="left:1569.00px;top:90.62px;font-size:15.57px;font-weight:400;color:#0b0b0b;letter-spacing:0.000px;transform:scaleX(0.8935);transform-origin:1.0px 0;">LYT</span><span class="t" id="t27" style="left:1570.00px;top:110.42px;font-size:15.57px;font-weight:700;color:#0b0b0b;letter-spacing:-0.396px;">$ 0.00</span><span class="t" id="t28" style="left:1678.00px;top:113.70px;font-size:14.53px;font-weight:400;color:#c9c9c9;letter-spacing:-0.291px;">Active</span><span class="t" id="t29" style="left:1744.50px;top:113.70px;font-size:14.53px;font-weight:400;color:#161616;letter-spacing:0.078px;">Inactive</span><span class="t" id="t30" style="left:1852.00px;top:113.70px;font-size:14.53px;font-weight:400;color:#c9c9c9;letter-spacing:0.222px;">New</span><span class="t" id="t31" style="left:263.20px;top:184.20px;font-size:14.53px;font-weight:700;color:#0b0b0b;letter-spacing:0.266px;">Name :</span><span class="t" id="t32" style="left:315.70px;top:184.20px;font-size:14.53px;font-weight:400;color:#0b0b0b;letter-spacing:-0.044px;">Brandon Copsey</span><span class="t" id="t33" style="left:263.20px;top:208.20px;font-size:14.53px;font-weight:700;color:#0b0b0b;letter-spacing:0.112px;">Abbreviation :</span><span class="t" id="t34" style="left:365.00px;top:208.20px;font-size:14.53px;font-weight:400;color:#0b0b0b;letter-spacing:0.000px;transform:scaleX(0.9267);transform-origin:1.0px 0;">BRAN</span><span class="t" id="t35" style="left:263.20px;top:232.20px;font-size:14.53px;font-weight:700;color:#0b0b0b;letter-spacing:-0.083px;">POPrefix :</span><span class="t" id="t36" style="left:335.30px;top:232.20px;font-size:14.53px;font-weight:400;color:#0b0b0b;letter-spacing:0.000px;transform:scaleX(0.8939);transform-origin:1.0px 0;">BC</span><span class="t" id="t37" style="left:263.20px;top:256.20px;font-size:14.53px;font-weight:700;color:#0b0b0b;letter-spacing:-0.160px;">Email :</span><span class="t" id="t38" style="left:314.00px;top:256.20px;font-size:14.53px;font-weight:400;color:#0b0b0b;letter-spacing:0.143px;">jharris@markettime.com</span><span class="t" id="t39" style="left:263.20px;top:280.20px;font-size:14.53px;font-weight:700;color:#0b0b0b;letter-spacing:-0.213px;">Salesperson Group :</span><span class="t" id="t40" style="left:404.80px;top:280.20px;font-size:14.53px;font-weight:400;color:#0b0b0b;letter-spacing:-0.181px;">Key Accounts</span><span class="t" id="t41" style="left:263.20px;top:304.20px;font-size:14.53px;font-weight:700;color:#0b0b0b;letter-spacing:-0.022px;">Email for Orders :</span><span class="t" id="t42" style="left:815.30px;top:184.20px;font-size:14.53px;font-weight:700;color:#0b0b0b;letter-spacing:0.366px;">Name :</span><span class="t" id="t43" style="left:867.90px;top:184.20px;font-size:14.53px;font-weight:400;color:#0b0b0b;letter-spacing:-0.013px;">Brandon Copsey</span><span class="t" id="t44" style="left:815.30px;top:208.20px;font-size:14.53px;font-weight:700;color:#0b0b0b;letter-spacing:-0.390px;">Address :</span><span class="t" id="t45" style="left:882.40px;top:208.20px;font-size:14.53px;font-weight:400;color:#0b0b0b;letter-spacing:-0.181px;">2050 N. Stemmons Fwy,Dallas, TX 75207</span><span class="t" id="t46" style="left:815.30px;top:232.20px;font-size:14.53px;font-weight:700;color:#0b0b0b;letter-spacing:-0.198px;">Phone :</span><span class="t" id="t47" style="left:870.60px;top:232.20px;font-size:14.53px;font-weight:400;color:#0b0b0b;letter-spacing:-0.215px;">(578) 823-9563</span><span class="t" id="t48" style="left:815.30px;top:256.20px;font-size:14.53px;font-weight:700;color:#0b0b0b;letter-spacing:-0.336px;">Fax :</span><span class="t" id="t49" style="left:850.60px;top:256.20px;font-size:14.53px;font-weight:400;color:#0b0b0b;letter-spacing:-0.215px;">(578) 555-5555</span><span class="t" id="t50" style="left:815.30px;top:280.20px;font-size:14.53px;font-weight:700;color:#0b0b0b;letter-spacing:-0.143px;">Email :</span><span class="t" id="t51" style="left:866.30px;top:280.20px;font-size:14.53px;font-weight:400;color:#13417a;letter-spacing:0.138px;">jharris@markettime.com</span><span class="t" id="t52" style="left:815.30px;top:304.20px;font-size:14.53px;font-weight:700;color:#0b0b0b;letter-spacing:0.097px;">Website :</span><span class="t" id="t53" style="left:1371.00px;top:184.20px;font-size:14.53px;font-weight:700;color:#0b0b0b;letter-spacing:0.073px;">Notes :</span><span class="t" id="t54" style="left:254.00px;top:358.20px;font-size:14.53px;font-weight:700;color:#0b0b0b;letter-spacing:-0.106px;">Orders</span><span class="t" id="t55" style="left:332.00px;top:358.20px;font-size:14.53px;font-weight:700;color:#0b0b0b;letter-spacing:-0.094px;">Customers</span><span class="t" id="t56" style="left:438.00px;top:358.20px;font-size:14.53px;font-weight:700;color:#0b0b0b;letter-spacing:0.254px;">Manufacturers</span><span class="t" id="t57" style="left:571.00px;top:358.20px;font-size:14.53px;font-weight:700;color:#c9c9c9;letter-spacing:-0.166px;">Comm % Settings</span><span class="t" id="t58" style="left:723.00px;top:358.20px;font-size:14.53px;font-weight:700;color:#0b0b0b;letter-spacing:0.186px;">Notes</span><span class="t" id="t59" style="left:795.00px;top:358.20px;font-size:14.53px;font-weight:700;color:#0b0b0b;letter-spacing:-0.121px;">Documents</span><span class="t" id="t60" style="left:904.00px;top:358.20px;font-size:14.53px;font-weight:700;color:#0b0b0b;letter-spacing:0.012px;">Divisions &amp; Territories</span><span class="t" id="t61" style="left:289.00px;top:412.15px;font-size:14.00px;font-weight:400;color:#3b3b3b;letter-spacing:0.012px;">Search by searchAll</span><span class="t" id="t62" style="left:695.80px;top:411.70px;font-size:14.53px;font-weight:400;color:#161616;letter-spacing:-0.198px;">Advanced</span><span class="t" id="t63" style="left:1844.70px;top:414.90px;font-size:14.53px;font-weight:400;color:#c9c9c9;letter-spacing:0.222px;">New</span><span class="t" id="t64" style="left:296.30px;top:461.70px;font-size:14.53px;font-weight:700;color:#0b0b0b;letter-spacing:0.355px;">Manufacturer</span><span class="t" id="t65" style="left:487.30px;top:461.70px;font-size:14.53px;font-weight:700;color:#0b0b0b;letter-spacing:-0.142px;">Order Code</span><span class="t" id="t66" style="left:740.00px;top:461.70px;font-size:14.53px;font-weight:700;color:#0b0b0b;letter-spacing:-0.023px;">Sp to Pay = Order Writer Commission</span><span class="t" id="t67" style="left:1130.70px;top:461.70px;font-size:14.53px;font-weight:700;color:#0b0b0b;letter-spacing:0.008px;">Sp to Pay Not = Order Writer Commission</span><span class="t" id="t68" style="left:1562.60px;top:461.70px;font-size:14.53px;font-weight:700;color:#0b0b0b;letter-spacing:0.267px;">Start Date</span><span class="t" id="t69" style="left:1694.60px;top:461.70px;font-size:14.53px;font-weight:700;color:#0b0b0b;letter-spacing:-0.120px;">End Date</span><span class="t" id="t70" style="left:296.30px;top:494.10px;font-size:14.53px;font-weight:400;color:#0b0b0b;letter-spacing:-0.203px;">All</span><span class="t" id="t71" style="left:486.30px;top:494.10px;font-size:14.53px;font-weight:400;color:#0b0b0b;letter-spacing:0.090px;">Program A [PA]</span><span class="t" id="t72" style="left:739.80px;top:494.10px;font-size:14.53px;font-weight:400;color:#0b0b0b;letter-spacing:-0.273px;">H: 50% | SP to Pay: 50%</span><span class="t" id="t73" style="left:1129.80px;top:494.10px;font-size:14.53px;font-weight:400;color:#0b0b0b;letter-spacing:-0.168px;">H: 50% | SP to Pay: 25% | OW: 25%</span><span class="t" id="t74" style="left:296.30px;top:527.60px;font-size:14.53px;font-weight:400;color:#0b0b0b;letter-spacing:-0.203px;">All</span><span class="t" id="t75" style="left:486.30px;top:527.60px;font-size:14.53px;font-weight:400;color:#0b0b0b;letter-spacing:0.066px;">House Gets More [HGM]</span><span class="t" id="t76" style="left:739.80px;top:527.60px;font-size:14.53px;font-weight:400;color:#0b0b0b;letter-spacing:-0.273px;">H: 37% | SP to Pay: 63%</span><span class="t" id="t77" style="left:1129.80px;top:527.60px;font-size:14.53px;font-weight:400;color:#0b0b0b;letter-spacing:-0.168px;">H: 37% | SP to Pay: 43% | OW: 20%</span><span class="t" id="t78" style="left:296.30px;top:561.10px;font-size:14.53px;font-weight:400;color:#0b0b0b;letter-spacing:-0.203px;">All</span><span class="t" id="t79" style="left:486.30px;top:561.10px;font-size:14.53px;font-weight:400;color:#0b0b0b;letter-spacing:0.021px;">Phone [PHO]</span><span class="t" id="t80" style="left:739.80px;top:561.10px;font-size:14.53px;font-weight:400;color:#0b0b0b;letter-spacing:-0.273px;">H: 45% | SP to Pay: 55%</span><span class="t" id="t81" style="left:1129.80px;top:561.10px;font-size:14.53px;font-weight:400;color:#0b0b0b;letter-spacing:-0.117px;">H: 45% | SP to Pay: 55% | OW: N/A</span><span class="t" id="t82" style="left:296.30px;top:594.40px;font-size:14.53px;font-weight:400;color:#0b0b0b;letter-spacing:-0.131px;">Canmore Candles</span><span class="t" id="t83" style="left:487.30px;top:594.40px;font-size:14.53px;font-weight:400;color:#0b0b0b;letter-spacing:0.000px;transform:scaleX(0.9091);transform-origin:0.0px 0;">TRADE SHOW [S]</span><span class="t" id="t84" style="left:739.80px;top:594.40px;font-size:14.53px;font-weight:400;color:#0b0b0b;letter-spacing:-0.273px;">H: 20% | SP to Pay: 80%</span><span class="t" id="t85" style="left:1129.80px;top:594.40px;font-size:14.53px;font-weight:400;color:#0b0b0b;letter-spacing:-0.168px;">H: 20% | SP to Pay: 70% | OW: 10%</span><span class="t" id="t86" style="left:1562.60px;top:594.40px;font-size:14.53px;font-weight:400;color:#0b0b0b;letter-spacing:-0.175px;">2024-06-01</span><span class="t" id="t87" style="left:1694.60px;top:594.40px;font-size:14.53px;font-weight:400;color:#0b0b0b;letter-spacing:-0.175px;">2024-06-30</span><span class="t" id="t88" style="left:296.30px;top:627.60px;font-size:14.53px;font-weight:400;color:#0b0b0b;letter-spacing:-0.131px;">Canmore Candles</span><span class="t" id="t89" style="left:487.30px;top:627.60px;font-size:14.53px;font-weight:400;color:#0b0b0b;letter-spacing:0.000px;transform:scaleX(0.9091);transform-origin:0.0px 0;">TRADE SHOW [S]</span><span class="t" id="t90" style="left:739.80px;top:627.60px;font-size:14.53px;font-weight:400;color:#0b0b0b;letter-spacing:-0.273px;">H: 20% | SP to Pay: 80%</span><span class="t" id="t91" style="left:1129.80px;top:627.60px;font-size:14.53px;font-weight:400;color:#0b0b0b;letter-spacing:-0.168px;">H: 20% | SP to Pay: 70% | OW: 10%</span><span class="t" id="t92" style="left:296.30px;top:661.10px;font-size:14.53px;font-weight:400;color:#0b0b0b;letter-spacing:-0.203px;">All</span><span class="t" id="t93" style="left:486.30px;top:661.10px;font-size:14.53px;font-weight:400;color:#0b0b0b;letter-spacing:-0.088px;">Factory Direct D [FACD]</span><span class="t" id="t94" style="left:739.80px;top:661.10px;font-size:14.53px;font-weight:400;color:#0b0b0b;letter-spacing:-0.273px;">H: 40% | SP to Pay: 60%</span><span class="t" id="t95" style="left:1129.80px;top:661.10px;font-size:14.53px;font-weight:400;color:#0b0b0b;letter-spacing:-0.117px;">H: 40% | SP to Pay: 60% | OW: N/A</span><span class="t" id="t96" style="left:296.30px;top:694.60px;font-size:14.53px;font-weight:400;color:#0b0b0b;letter-spacing:-0.203px;">All</span><span class="t" id="t97" style="left:486.30px;top:694.60px;font-size:14.53px;font-weight:400;color:#0b0b0b;letter-spacing:-0.224px;">Factory Direct R [FACR]</span><span class="t" id="t98" style="left:739.80px;top:694.60px;font-size:14.53px;font-weight:400;color:#0b0b0b;letter-spacing:-0.273px;">H: 40% | SP to Pay: 60%</span><span class="t" id="t99" style="left:1129.80px;top:694.60px;font-size:14.53px;font-weight:400;color:#0b0b0b;letter-spacing:-0.117px;">H: 40% | SP to Pay: 60% | OW: N/A</span><span class="t" id="t100" style="left:296.30px;top:727.80px;font-size:14.53px;font-weight:400;color:#0b0b0b;letter-spacing:-0.203px;">All</span><span class="t" id="t101" style="left:487.30px;top:727.80px;font-size:14.53px;font-weight:400;color:#0b0b0b;letter-spacing:0.332px;">Today [toda]</span><span class="t" id="t102" style="left:739.80px;top:727.80px;font-size:14.53px;font-weight:400;color:#0b0b0b;letter-spacing:-0.273px;">H: 56% | SP to Pay: 44%</span><span class="t" id="t103" style="left:1129.80px;top:727.80px;font-size:14.53px;font-weight:400;color:#0b0b0b;letter-spacing:-0.117px;">H: 56% | SP to Pay: 44% | OW: N/A</span><span class="t" id="t104" style="left:296.30px;top:761.10px;font-size:14.53px;font-weight:400;color:#0b0b0b;letter-spacing:-0.203px;">All</span><span class="t" id="t105" style="left:486.30px;top:761.10px;font-size:14.53px;font-weight:400;color:#0b0b0b;letter-spacing:0.326px;">Imported Direct [ID]</span><span class="t" id="t106" style="left:739.80px;top:761.10px;font-size:14.53px;font-weight:400;color:#0b0b0b;letter-spacing:-0.273px;">H: 50% | SP to Pay: 50%</span><span class="t" id="t107" style="left:1129.80px;top:761.10px;font-size:14.53px;font-weight:400;color:#0b0b0b;letter-spacing:-0.117px;">H: 50% | SP to Pay: 50% | OW: N/A</span><span class="t" id="t108" style="left:296.30px;top:794.50px;font-size:14.53px;font-weight:400;color:#0b0b0b;letter-spacing:-0.203px;">All</span><span class="t" id="t109" style="left:487.30px;top:794.50px;font-size:14.53px;font-weight:400;color:#0b0b0b;letter-spacing:0.075px;">6623 [6623]</span><span class="t" id="t110" style="left:739.80px;top:794.50px;font-size:14.53px;font-weight:400;color:#0b0b0b;letter-spacing:-0.273px;">H: 67% | SP to Pay: 33%</span><span class="t" id="t111" style="left:1129.80px;top:794.50px;font-size:14.53px;font-weight:400;color:#0b0b0b;letter-spacing:-0.117px;">H: 67% | SP to Pay: 33% | OW: N/A</span><span class="t" id="t112" style="left:251.30px;top:837.70px;font-size:14.53px;font-weight:400;color:#0b0b0b;letter-spacing:0.448px;">Total:</span><span class="t" id="t113" style="left:300.70px;top:837.70px;font-size:14.53px;font-weight:400;color:#0b0b0b;letter-spacing:0.000px;transform:scaleX(0.9487);transform-origin:1.0px 0;">18</span><span class="t" id="t114" style="left:994.00px;top:838.70px;font-size:14.53px;font-weight:400;color:#cfcfcf;letter-spacing:0.000px;">1</span><span class="t" id="t115" style="left:1042.50px;top:838.70px;font-size:14.53px;font-weight:400;color:#161616;letter-spacing:0.000px;">2</span><span class="t" id="t116" style="left:1727.40px;top:838.20px;font-size:14.53px;font-weight:400;color:#0b0b0b;letter-spacing:-0.114px;">Per page:</span><span class="t" id="t117" style="left:1823.70px;top:838.20px;font-size:14.53px;font-weight:400;color:#0b0b0b;letter-spacing:0.227px;">10</span>

<!-- native tooltip -->
<div class="a" style="left:1851px;top:643px;width:42px;height:24.5px;background:#c4c4c4;border:1px solid #0a0a0a"></div>
<span class="t" style="left:1859px;top:649.5px;font-size:12px;color:#111">View</span>
<!-- highlight -->
<div class="a" style="left:1775px;top:607px;width:83px;height:49px;overflow:hidden;box-shadow:0 0 2px 0.5px rgba(255,255,255,0.55)">
  <div class="a" style="left:0;top:0;width:83px;height:49px;background:#f1f5f9"></div>
  <div class="a" style="left:0;top:10.5px;width:83px;height:33.3px;background:#e8e8e8"></div>
  <div class="a" style="left:0;top:10px;width:83px;height:1px;background:#dadde1"></div>
  <div class="a" style="left:0;top:43.5px;width:83px;height:1px;background:#dadde1"></div>
  <div class="a" style="left:40px;top:0;width:1px;height:49px;background:#dadde1"></div>
  <div class="a" style="left:55px;top:-1px;width:24px;height:7px;background:#3a9ae0;border-radius:0 0 3px 3px"></div>
  <div class="a" style="left:76px;top:36px;width:10px;height:20px;background:#f6f6f6;border-left:1px solid #0a0a0a;border-top:1px solid #0a0a0a"></div>
  <div class="a" style="left:0;top:0;width:83px;height:49px;box-shadow:inset 0 0 2.5px 1.5px rgba(255,255,255,0.7)"></div>
  <div class="a" style="left:55.2px;top:15.3px;width:23.6px;height:23.4px;background:#1470c0;border-radius:2.5px"></div>
  <svg style="left:58.8px;top:21.5px" width="16.4" height="11" viewBox="0 0 16.4 11"><path d="M0 5.5 Q8.2 -5 16.4 5.5 Q8.2 16 0 5.5Z" fill="#fff"/><circle cx="8.2" cy="5.5" r="3.9" fill="#1470c0"/><circle cx="8.2" cy="5.5" r="2.8" fill="#fff"/><circle cx="7.2" cy="4.5" r="1.3" fill="#1470c0"/></svg>
  <div class="a" style="left:8px;top:12.3px;width:43px;height:30.5px;background:#333;border-radius:3px"></div>
  <svg style="left:51px;top:21.8px" width="4" height="8" viewBox="0 0 4 8"><path d="M0 0 L4 4 L0 8Z" fill="#333"/></svg>
  <span class="t" style="left:14px;top:21px;font-size:14.5px;color:#fff">View</span>
</div>

</body></html>
